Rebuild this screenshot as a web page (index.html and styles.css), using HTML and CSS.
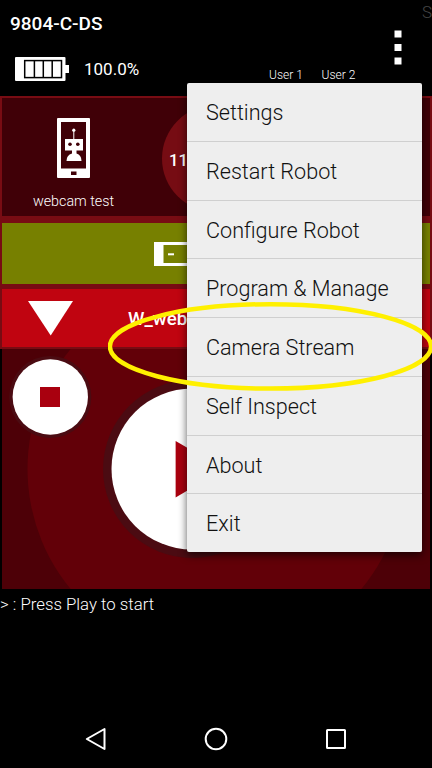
FILE: index.html
```html
<!DOCTYPE html>
<html lang="en">
<head>
<meta charset="utf-8">
<title>Robot Controller</title>
<link rel="stylesheet" href="styles.css">
</head>
<body>
<div class="screen">
  <header class="header">
    <div class="device">9804-C-DS</div>
    <div class="status">
      <svg class="battery" width="54" height="25" viewBox="0 0 54 25">
        <rect width="50.5" height="24" rx="1" fill="#fff"/>
        <rect x="50" y="8" width="4" height="8" fill="#fff"/>
        <rect x="9.7" y="3.6" width="36.8" height="17" fill="none" stroke="#000" stroke-width="1.5"/>
        <path d="M19.4 4v17M28.3 4v17M37.2 4v17" stroke="#000" stroke-width="1.5"/>
      </svg>
      <span class="level">100.0%</span>
      <span class="user user-one">User 1</span>
      <span class="user">User 2</span>
    </div>
    <svg class="more" width="8" height="36" viewBox="0 0 8 36"><path d="M.5 .5h7v7h-7zM.5 14h7v7h-7zM.5 27.5h7v7h-7z" fill="#fff"/></svg>
    <span class="ghost">S</span>
  </header>

  <main class="panel">
    <section class="telemetry">
      <div class="robot">
        <svg width="33" height="60" viewBox="0 0 33 60">
          <path fill="#fff" fill-rule="evenodd" d="M1 0h31q1 0 1 1v58q0 1-1 1H1q-1 0-1-1V1q0-1 1-1zM4 4v46.5h25V4zM14 53.5v3.5h5.5v-3.5z"/>
          <circle cx="16.8" cy="12.2" r="1.6" fill="#fff"/>
          <path d="M16.8 13v9" stroke="#fff"/>
          <path fill="#fff" d="M8 21h18v11.5h-6.5v3q5 1.5 5 7.5h-15q0-6 5.500-7.500v-3H8z"/>
          <circle cx="13" cy="26.300" r="1.800" fill="#400007"/><circle cx="20.800" cy="26.300" r="1.800" fill="#400007"/>
        </svg>
        <span class="caption">webcam test</span>
      </div>
      <div class="voltage">11</div>
    </section>
    <section class="power">
      <svg width="54" height="25" viewBox="0 0 54 25">
        <path fill="#fff" fill-rule="evenodd" d="M0 0h50v8h4v8h-4v8H0zM9.500 3v18H47V3z"/>
        <path d="M14 12.300h6" stroke="#fff" stroke-width="2"/>
      </svg>
    </section>
    <section class="program">
      <svg class="arrow" width="45" height="35" viewBox="0 0 45 35"><path d="M0 0h45L22.700 34.500z" fill="#fff"/></svg>
      <span class="program-name">W_web</span>
    </section>
    <section class="controls">
      <svg width="428" height="240" viewBox="2 349 428 240">
        <circle cx="216" cy="469" r="188.500" fill="#620008"/>
        <circle cx="50.300" cy="397" r="41" fill="#4b0b12"/>
        <circle cx="50.300" cy="397" r="37.700" fill="#fff"/>
        <rect x="40" y="387" width="20" height="20" fill="#a9000f"/>
        <circle cx="192" cy="469" r="89" fill="#4b0b12"/>
        <circle cx="192" cy="469" r="80.500" fill="#fff"/>
        <path d="M175.600 441v56.500L224 469z" fill="#a9000f"/>
      </svg>
    </section>
  </main>

  <div class="console">&gt; : Press Play to start</div>

  <nav class="nav">
    <svg width="24" height="24" viewBox="0 0 24 24"><path d="M20.500 2v20L2.800 12z"/></svg>
    <svg width="24" height="24" viewBox="0 0 24 24"><circle cx="12" cy="12" r="10.300"/></svg>
    <svg width="24" height="24" viewBox="0 0 24 24"><rect x="3" y="3" width="18" height="18" rx=".5"/></svg>
  </nav>

  <ul class="menu">
    <li>Settings</li>
    <li>Restart Robot</li>
    <li>Configure Robot</li>
    <li>Program &amp; Manage</li>
    <li>Camera Stream</li>
    <li>Self Inspect</li>
    <li>About</li>
    <li>Exit</li>
  </ul>

  <svg class="highlight" width="324" height="92" viewBox="108 300 324 92"><ellipse cx="270.500" cy="346.400" rx="160.600" ry="42.200" fill="none" stroke="#fff000" stroke-width="4.500"/></svg>
</div>
</body>
</html>
```

FILE: styles.css
```css
* { box-sizing: border-box; }
body { margin: 0; background: #000; }
svg { display: block; flex: none; }

.screen {
  position: relative;
  display: flex;
  flex-direction: column;
  width: 432px;
  height: 768px;
  overflow: hidden;
  background: #000;
  color: #fff;
  font-family: Roboto, "Liberation Sans", sans-serif;
}

.header {
  position: relative;
  height: 96px;
  padding: 12px 0 0 10px;
}
.device { font-size: 19px; line-height: 24px; font-weight: 500; }
.status {
  display: flex;
  align-items: flex-start;
  padding: 21px 0 0 5px;
}
.level { width: 60px; margin: 2px 0 0 15px; font-size: 17px; line-height: 20px; }
.user { margin-top: 10px; font-size: 12px; line-height: 16px; font-weight: 300; white-space: nowrap; }
.user-one { width: 52.500px; margin-left: 125px; }
.more { position: absolute; left: 394px; top: 30px; }
.ghost { position: absolute; left: 422px; top: 2px; font-size: 17px; line-height: 20px; font-weight: 300; color: #444; }

.panel {
  display: flex;
  flex-direction: column;
  height: 493px;
}
.telemetry, .power, .program { border: solid #780c13; border-width: 0 2px; }
.telemetry {
  display: flex;
  height: 124.500px;
  border-width: 2px 2px 5px;
  background: #400007;
}
.robot {
  display: flex;
  flex-direction: column;
  align-items: center;
  width: 143px;
  padding-top: 20px;
}
.caption { margin-top: 14px; font-size: 14.300px; line-height: 18px; font-weight: 300; }
.voltage {
  width: 107px;
  height: 107px;
  margin: 7px 0 0 17px;
  padding-left: 7px;
  border-radius: 50%;
  background: #760c13;
  font-size: 16.500px;
  line-height: 112px;
  font-weight: 500;
}
.power {
  height: 68.500px;
  padding: 19px 0 0 152px;
  border-width: 2px 2px 5px;
  background: #778000;
}
.program {
  display: flex;
  height: 60px;
  padding: 12px 0 0 25.500px;
  border-bottom-width: 2px;
  background: #c00410;
}
.program-name { margin: 6px 0 0 55.500px; font-size: 18.700px; line-height: 24px; font-weight: 500; }
.controls { height: 240px; padding-left: 2px; background: linear-gradient(90deg, #000 2px, #4d0007 2px, #4d0007 430px, #000 430px); }

.console { height: 30px; padding-top: 4px; font-size: 16.800px; line-height: 22px; font-weight: 300; }

.nav {
  display: flex;
  gap: 96px;
  margin-top: auto;
  padding: 0 84px 17px;
  fill: none;
  stroke: #fff;
  stroke-width: 2;
  stroke-linejoin: round;
}

.menu {
  position: absolute;
  left: 187px;
  top: 83px;
  width: 235px;
  height: 469px;
  margin: 0;
  padding: 0;
  list-style: none;
  border-radius: 2px;
  background: #eee;
  box-shadow: 0 3px 9px rgba(0, 0, 0, .65);
  color: #111;
  font-size: 21.600px;
  font-weight: 300;
}
.menu li {
  height: 58.750px;
  padding-left: 19px;
  border-bottom: 1px solid #cfcfcf;
  line-height: 60.700px;
}
.menu li:last-child { border-bottom: 0; }

.highlight { position: absolute; left: 108px; top: 300px; }
```
